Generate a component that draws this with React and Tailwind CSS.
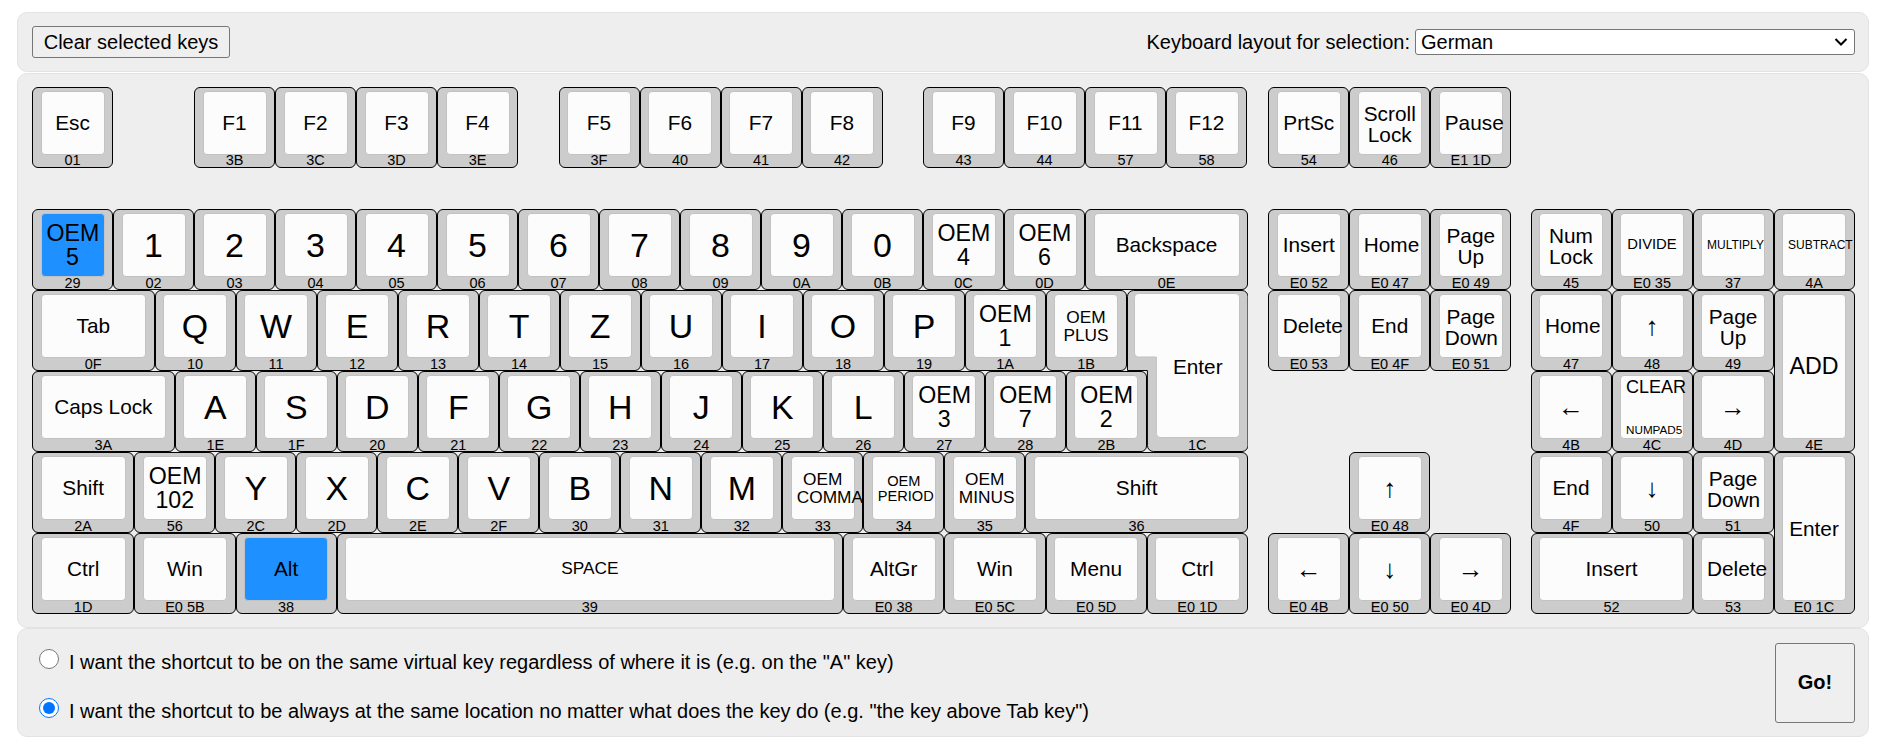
import React from 'react';
import clsx from 'clsx';

const BIG = 'text-[33.9px]';
const MED = 'text-[23.2px]';
const SMALL = 'text-[17.3px]';
const ARROW = 'text-[26px]';
const SHIFT = 'ml-px -mr-px';

// walks a row left to right, widths are in quarters of a key
const row = (gridRow, start, items, shift) => {
    let col = start;
    return items.map(([label, code, span = 4, size], i) => {
        const key = { label, code, col, span, size, gridRow };
        if (shift === 'main') key.shift = i === 0 ? '-mr-px' : SHIFT;
        if (shift === 'nav') key.shift = SHIFT;
        col += span;
        return key;
    });
};

const keys = [
    ...row(1, 0, [['Esc', '01']]),
    ...row(1, 8, [['F1', '3B'], ['F2', '3C'], ['F3', '3D'], ['F4', '3E']]),
    ...row(1, 26, [['F5', '3F'], ['F6', '40'], ['F7', '41'], ['F8', '42']]),
    ...row(1, 44, [['F9', '43'], ['F10', '44'], ['F11', '57'], ['F12', '58']]),
    ...row(1, 61, [['PrtSc', '54'], ['Scroll Lock', '46'], ['Pause', 'E1 1D']], 'nav'),

    ...row(3, 0, [
        ['OEM 5', '29', 4, MED], ['1', '02', 4, BIG], ['2', '03', 4, BIG], ['3', '04', 4, BIG], ['4', '05', 4, BIG],
        ['5', '06', 4, BIG], ['6', '07', 4, BIG], ['7', '08', 4, BIG], ['8', '09', 4, BIG], ['9', '0A', 4, BIG],
        ['0', '0B', 4, BIG], ['OEM 4', '0C', 4, MED], ['OEM 6', '0D', 4, MED],
    ]),
    { label: 'Backspace', code: '0E', col: 52, span: 8, gridRow: 3, shift: '-mr-px' },
    ...row(3, 61, [['Insert', 'E0 52'], ['Home', 'E0 47'], ['Page Up', 'E0 49']], 'nav'),
    ...row(3, 74, [
        ['Num Lock', '45'], ['DIVIDE', 'E0 35', 4, 'text-[14.8px]'],
        ['MULTIPLY', '37', 4, 'text-[12px]'], ['SUBTRACT', '4A', 4, 'text-[12px]'],
    ]),

    ...row(4, 0, [
        ['Tab', '0F', 6], ['Q', '10', 4, BIG], ['W', '11', 4, BIG], ['E', '12', 4, BIG], ['R', '13', 4, BIG],
        ['T', '14', 4, BIG], ['Z', '15', 4, BIG], ['U', '16', 4, BIG], ['I', '17', 4, BIG], ['O', '18', 4, BIG],
        ['P', '19', 4, BIG], ['OEM 1', '1A', 4, MED], ['OEM PLUS', '1B', 4, SMALL],
    ], 'main'),
    ...row(4, 61, [['Delete', 'E0 53'], ['End', 'E0 4F'], ['Page Down', 'E0 51']], 'nav'),
    ...row(4, 74, [['Home', '47'], ['↑', '48', 4, ARROW], ['Page Up', '49']]),
    { label: 'ADD', code: '4E', col: 86, span: 4, gridRow: '4 / span 2', size: MED },

    ...row(5, 0, [
        ['Caps Lock', '3A', 7], ['A', '1E', 4, BIG], ['S', '1F', 4, BIG], ['D', '20', 4, BIG], ['F', '21', 4, BIG],
        ['G', '22', 4, BIG], ['H', '23', 4, BIG], ['J', '24', 4, BIG], ['K', '25', 4, BIG], ['L', '26', 4, BIG],
        ['OEM 3', '27', 4, MED], ['OEM 7', '28', 4, MED], ['OEM 2', '2B', 4, MED],
    ], 'main'),
    ...row(5, 74, [['←', '4B', 4, ARROW], ['', '4C'], ['→', '4D', 4, ARROW]]),

    ...row(6, 0, [
        ['Shift', '2A', 5], ['OEM 102', '56', 4, MED], ['Y', '2C', 4, BIG], ['X', '2D', 4, BIG], ['C', '2E', 4, BIG],
        ['V', '2F', 4, BIG], ['B', '30', 4, BIG], ['N', '31', 4, BIG], ['M', '32', 4, BIG],
        ['OEM COMMA', '33', 4, SMALL], ['OEM PERIOD', '34', 4, 'text-[14.6px]'], ['OEM MINUS', '35', 4, SMALL],
        ['Shift', '36', 11],
    ], 'main'),
    ...row(6, 65, [['↑', 'E0 48', 4, ARROW]], 'nav'),
    ...row(6, 74, [['End', '4F'], ['↓', '50', 4, ARROW], ['Page Down', '51']]),
    { label: 'Enter', code: 'E0 1C', col: 86, span: 4, gridRow: '6 / span 2' },

    ...row(7, 0, [
        ['Ctrl', '1D', 5], ['Win', 'E0 5B', 5], ['Alt', '38', 5],
        ['SPACE', '39', 25, SMALL], ['AltGr', 'E0 38', 5], ['Win', 'E0 5C', 5], ['Menu', 'E0 5D', 5], ['Ctrl', 'E0 1D', 5],
    ], 'main'),
    ...row(7, 61, [['←', 'E0 4B', 4, ARROW], ['↓', 'E0 50', 4, ARROW], ['→', 'E0 4D', 4, ARROW]], 'nav'),
    ...row(7, 74, [['Insert', '52', 8], ['Delete', '53']]),
];

const selected = ['29', '38'];

const Key = ({ keyDef }) => {
    const { label, code, col, span, size, gridRow, shift } = keyDef;
    const wraps = label.includes(' ') && label !== 'Caps Lock';
    return (
        <div
            className={clsx('flex flex-col rounded-[6px] border border-black bg-[#ccc]', shift)}
            style={{ gridColumn: `${col + 1} / span ${span}`, gridRow }}
        >
            <div
                className={clsx(
                    'mx-[7.5px] mt-[3px] flex flex-1 items-center rounded-[4px] border border-[#c2c2c2] px-[5px]',
                    selected.includes(code) ? 'bg-[#1e90ff]' : 'bg-[#fcfcfc]'
                )}
            >
                {code === '4C' ? (
                    <div className="flex h-full flex-col justify-between whitespace-nowrap py-[2px] leading-none">
                        <span className="text-[18px]">CLEAR</span>
                        <span className="text-[11.7px]">NUMPAD5</span>
                    </div>
                ) : (
                    <div className={clsx('w-full text-center leading-[1.03]', wraps && 'pt-[2px]', size ?? 'text-[20.8px]')}>
                        {label}
                    </div>
                )}
            </div>
            <div
                className={clsx(
                    'flex h-[12px] shrink-0 items-center justify-center text-[14.5px] leading-none',
                    gridRow === 1 && 'pb-[2px]'
                )}
            >
                {code}
            </div>
        </div>
    );
};

// the tall enter of the main block is the only key that is not a rectangle
const EnterKey = () => (
    <div className="relative -mr-px ml-px" style={{ gridColumn: '55 / span 6', gridRow: '4 / span 2' }}>
        <svg className="absolute inset-0 h-full w-full" viewBox="0 0 122 162" preserveAspectRatio="none">
            <path
                d="M6.5 .5H115.5A6 6 0 0 1 121.5 6.5V155.5A6 6 0 0 1 115.5 161.5H26.5A6 6 0 0 1 20.5 155.5V80.5H.5V6.5A6 6 0 0 1 6.5 .5Z"
                fill="#ccc"
                stroke="#000"
            />
            <path
                d="M11.5 3.5H109A4 4 0 0 1 113 7.5V143.5A4 4 0 0 1 109 147.5H33.5A4 4 0 0 1 29.5 143.5V67H11.5A4 4 0 0 1 7.5 63V7.5A4 4 0 0 1 11.5 3.5Z"
                fill="#fcfcfc"
                stroke="#c2c2c2"
            />
        </svg>
        <div className="absolute bottom-[15px] left-[30px] right-[9px] top-[6px] flex items-center justify-center text-[20.8px]">
            Enter
        </div>
        <div className="absolute bottom-px left-[21px] right-px flex h-[12px] items-center justify-center text-[14.5px] leading-none">
            1C
        </div>
    </div>
);

const Panel = ({ className, children }) => (
    <div className={clsx('rounded-[10px] border border-[#e3e3e3] bg-[#eee]', className)}>{children}</div>
);

const App = () => {
    return (
        <div className="ml-[17px] mt-3 w-[1852px] font-['Liberation_Sans',Arial,sans-serif] text-[20px] text-black">
            <Panel className="flex h-[60px] items-center justify-between pl-[14px] pr-[13px]">
                <button className="h-8 w-[198px] rounded-[3px] border border-[#767676] bg-[#efefef]">
                    Clear selected keys
                </button>
                <div className="flex items-center gap-[5px]">
                    <span>Keyboard layout for selection:</span>
                    <div className="relative">
                        <select className="block h-[26px] w-[440px] appearance-none rounded-[3px] border border-[#767676] bg-white pl-[5px] leading-[22px]">
                            <option>German</option>
                        </select>
                        <svg
                            className="pointer-events-none absolute right-[7px] top-[9px]"
                            width="14"
                            height="8"
                            viewBox="0 0 14 8"
                            fill="none"
                            stroke="#000"
                            strokeWidth="2"
                        >
                            <path d="M1.5 1 7 6.5 12.5 1" />
                        </svg>
                    </div>
                </div>
            </Panel>

            <Panel className="mt-px h-[555px] pl-[14px] pt-[13px]">
                <div className="grid grid-cols-[repeat(90,20.25px)] grid-rows-[81px_41px_81px_81px_81px_81px_81px]">
                    {keys.map((keyDef) => (
                        <Key key={`${keyDef.gridRow}-${keyDef.col}`} keyDef={keyDef} />
                    ))}
                    <EnterKey />
                </div>
            </Panel>

            <Panel className="flex h-[109px] items-center justify-between pl-[21px] pr-[13px]">
                <div className="flex flex-col gap-[19px] pt-[7px]">
                    <label className="flex items-center gap-[10px]">
                        <input type="radio" name="mode" className="mb-[6px] h-5 w-5 accent-[#0075ff]" />
                        <span>I want the shortcut to be on the same virtual key regardless of where it is (e.g. on the "A" key)</span>
                    </label>
                    <label className="flex items-center gap-[10px]">
                        <input type="radio" name="mode" defaultChecked className="mb-[6px] h-5 w-5 accent-[#0075ff]" />
                        <span>I want the shortcut to be always at the same location no matter what does the key do (e.g. "the key above Tab key")</span>
                    </label>
                </div>
                <button className="h-20 w-20 rounded-[3px] border border-[#767676] bg-[#efefef] pb-px font-bold">Go!</button>
            </Panel>
        </div>
    );
};

export default App;
